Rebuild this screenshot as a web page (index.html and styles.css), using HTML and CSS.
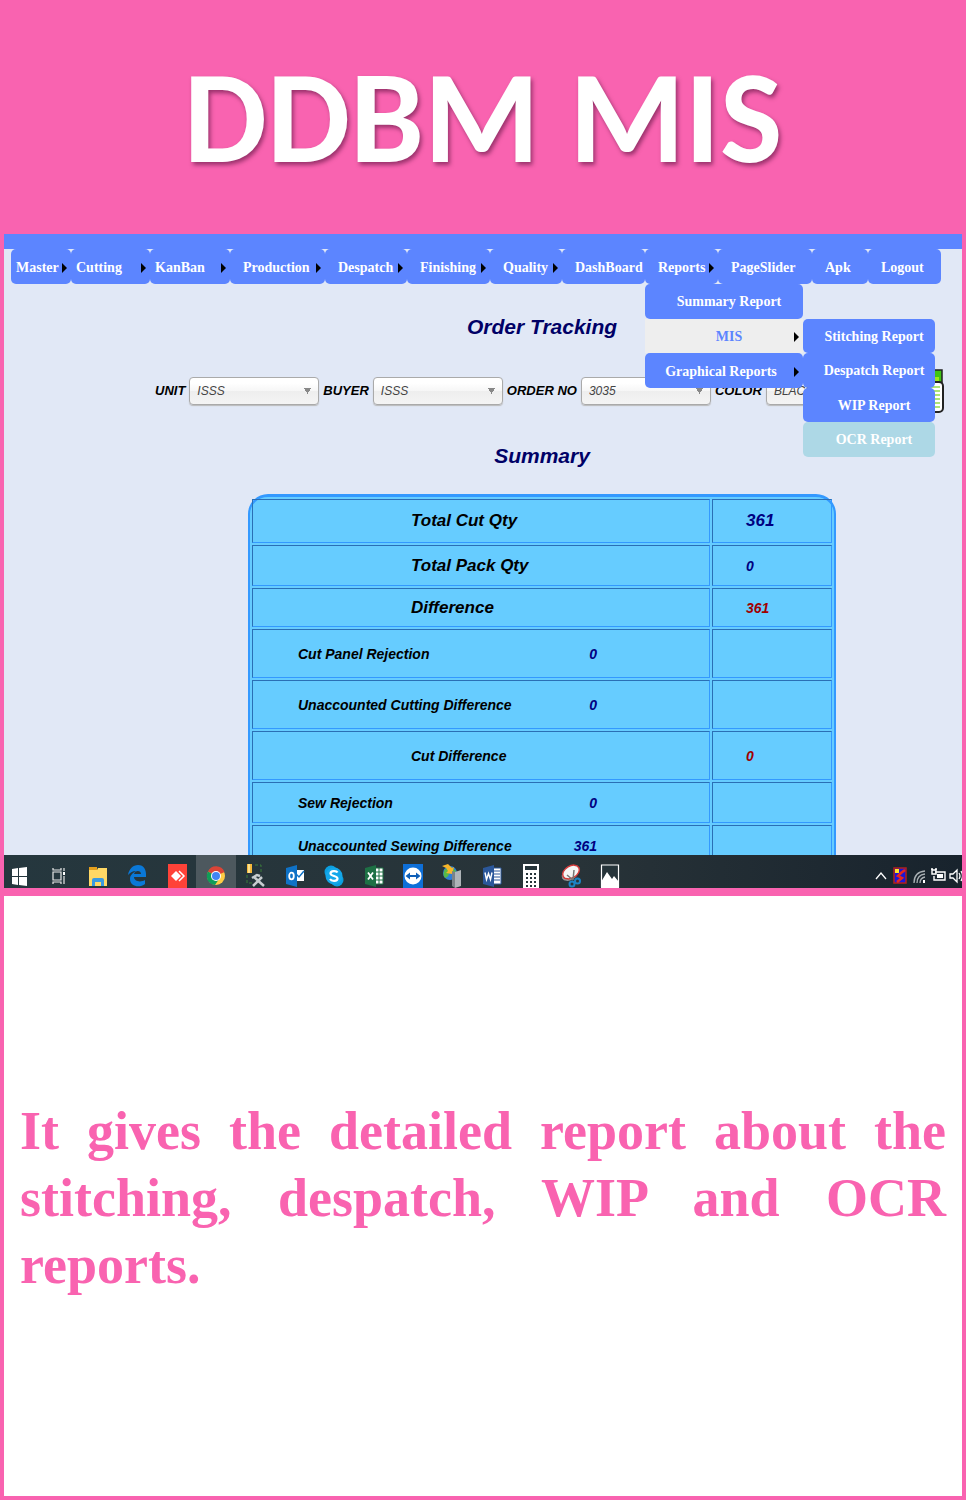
FILE: index.html
```html
<!DOCTYPE html>
<html lang="en">
<head>
<meta charset="utf-8">
<meta name="viewport" content="width=device-width, initial-scale=1">
<title>DDBM MIS</title>
<link rel="stylesheet" href="styles.css">
</head>
<body>
<div class="page">
  <header class="banner"><h1>DDBM MIS</h1></header>

  <section class="screen">
    <nav class="nav">
      <ul class="menu">
        <li><a class="tight" href="#">Master<i class="arrow"></i></a></li>
        <li><a class="tight" href="#">Cutting<i class="arrow"></i></a></li>
        <li><a class="tight" href="#">KanBan<i class="arrow"></i></a></li>
        <li><a href="#">Production<i class="arrow"></i></a></li>
        <li><a href="#">Despatch<i class="arrow"></i></a></li>
        <li><a href="#">Finishing<i class="arrow"></i></a></li>
        <li><a href="#">Quality<i class="arrow"></i></a></li>
        <li><a href="#">DashBoard</a></li>
        <li><a href="#">Reports<i class="arrow"></i></a>
          <ul class="sub reports">
            <li><a href="#">Summary Report</a></li>
            <li><a class="hover" href="#">MIS<i class="arrow"></i></a>
              <ul class="sub mis">
                <li><a href="#">Stitching Report</a></li>
                <li><a href="#">Despatch Report</a></li>
                <li><a href="#">WIP Report</a></li>
                <li><a class="current" href="#">OCR Report</a></li>
              </ul>
            </li>
            <li><a class="wide" href="#">Graphical Reports<i class="arrow"></i></a></li>
          </ul>
        </li>
        <li><a href="#">PageSlider</a></li>
        <li><a href="#">Apk</a></li>
        <li><a href="#">Logout</a></li>
      </ul>
    </nav>

    <main class="content">
      <h2>Order Tracking</h2>
      <form class="filters">
        <label for="unit">UNIT</label>
        <select id="unit"><option>ISSS</option></select>
        <label for="buyer">BUYER</label>
        <select id="buyer"><option>ISSS</option></select>
        <label for="order">ORDER NO</label>
        <select id="order"><option>3035</option></select>
        <label for="color">COLOR</label>
        <select id="color"><option>BLACK</option></select>
        <button class="export" type="button" aria-label="Export">
          <svg width="42" height="44" viewBox="0 0 42 44"><rect x="1" y="1" width="39" height="20" fill="#3fc414" stroke="#222" stroke-width="1.5"/><rect x="32" y="8" width="5" height="5" fill="#9be819"/><rect x="1" y="13" width="40" height="30" rx="4" fill="#fff" stroke="#222" stroke-width="2"/><path d="M6 18h32M6 22h32M6 26h32M6 30h32M6 34h32M6 38h32" stroke="#92dc4a" stroke-width="1.5"/></svg>
        </button>
      </form>
      <h2>Summary</h2>
      <table class="summary">
        <tbody>
          <tr class="r44 big"><td><div class="mid">Total Cut Qty</div></td><td class="num">361</td></tr>
          <tr class="r41 big"><td><div class="mid">Total Pack Qty</div></td><td class="num small">0</td></tr>
          <tr class="r39 big"><td><div class="mid">Difference</div></td><td class="num small red">361</td></tr>
          <tr class="r49"><td><div class="pair"><span>Cut Panel Rejection</span><b>0</b></div></td><td></td></tr>
          <tr class="r49"><td><div class="pair"><span>Unaccounted Cutting Difference</span><b>0</b></div></td><td></td></tr>
          <tr class="r49"><td><div class="mid">Cut Difference</div></td><td class="num red">0</td></tr>
          <tr class="r41"><td><div class="pair"><span>Sew Rejection</span><b>0</b></div></td><td></td></tr>
          <tr class="r41"><td><div class="pair"><span>Unaccounted Sewing Difference</span><b>361</b></div></td><td></td></tr>
        </tbody>
      </table>
    </main>

    <footer class="taskbar">
      <div class="apps">
        <button aria-label="Start"><svg viewBox="0 0 24 24"><path fill="#fff" d="M5 5l6-1v8H5zM12 4l8-1v9h-8zM5 13h6v8l-6-1zM12 13h8v9l-8-1z"/></svg></button>
        <button aria-label="Task view"><svg viewBox="0 0 24 24"><path fill="none" stroke="#e8e8e8" stroke-width="1.2" d="M6 8h8v8H6zM6 4v2h8V4M6 20v-2h8v2M17 4v3M17 12v8"/><path fill="#fff" d="M16 8h2v3h-2z"/></svg></button>
        <button aria-label="File Explorer"><svg viewBox="0 0 24 24"><path fill="#e59f1c" d="M3 3h8v4H3z"/><path fill="#ffd865" d="M3 6h8l1-2h9v18H3z"/><path fill="#3a9ae0" d="M6 22v-6q0-2 2-2h8q2 0 2 2v6h-3v-4H9v4z"/></svg></button>
        <button aria-label="Edge"><svg viewBox="0 0 24 24"><path fill="#0a78d7" d="M3 11C4 5 8 1 13 1c6 0 8 5 8 9v3H9c0 4 6 6 11 3v4c-5 4-15 3-15-5 0-4 3-6 6-8-4 0-6 2-8 4zm6-1h7c0-4-6-4-7 0z"/></svg></button>
        <button aria-label="AnyDesk"><svg viewBox="0 0 24 24"><path fill="#ff4238" d="M3 0h19v24H3z"/><path fill="#fff" d="M11 7l5 5-5 5-5-5z"/><path fill="none" stroke="#fff" stroke-width="1.500" d="M14 7l5 5-5 5"/></svg></button>
        <button class="on" aria-label="Chrome"><svg viewBox="0 0 24 24"><circle cx="12" cy="12" r="9" fill="#fc4"/><path fill="#db4437" d="M12 12L4 7.500A9 9 0 0 1 20.500 8z"/><path fill="#0f9d58" d="M12 12L4 7.500A9 9 0 0 0 11 21l4-6z"/><circle cx="12" cy="12" r="5" fill="#fff"/><circle cx="12" cy="12" r="4" fill="#4285f4"/></svg></button>
        <button aria-label="SQL tools"><svg viewBox="0 0 24 24"><path fill="#f6b93b" d="M3 0h5v9H3z"/><path fill="#ffe08a" d="M4 0h2v9H4z"/><path fill="none" stroke="#3b7d3a" stroke-dasharray="3 2" d="M11 1h6v7M3 11v8h6"/><path fill="none" stroke="#c7ccd0" stroke-width="2.500" d="M9 22l9-9M10 13l10 9M8 14l5-3 3 1"/></svg></button>
        <button aria-label="Outlook"><svg viewBox="0 0 24 24"><path fill="#fff" d="M12 6h9v11h-9z"/><path fill="none" stroke="#0f72c6" stroke-width="1.500" d="M12 9l4 4 5-6"/><path fill="#0f72c6" d="M3 4l11-3v22L3 20z"/><ellipse cx="8.500" cy="12" rx="2.300" ry="3.300" fill="none" stroke="#fff" stroke-width="1.800"/></svg></button>
        <button aria-label="Skype"><svg viewBox="0 0 24 24"><circle cx="9" cy="8" r="6.500" fill="#0b9fe0"/><circle cx="15" cy="16" r="6.500" fill="#0b9fe0"/><circle cx="12" cy="12" r="8.500" fill="#14a7ea"/><path fill="none" stroke="#fff" stroke-width="2.200" d="M15.500 8.500c-1-2-7-2-7 1 0 3 7 2 7 5 0 3-6 3-7.500.500"/></svg></button>
        <button aria-label="Excel"><svg viewBox="0 0 24 24"><path fill="#fff" stroke="#1e7145" d="M13 4h8v16h-8z"/><path stroke="#1e7145" d="M13 8h8M13 12h8M13 16h8M17 4v16"/><path fill="#1e7145" d="M3 4l11-3v22L3 20z"/><path stroke="#fff" stroke-width="1.800" d="M6 8.500l5 7M11 8.500l-5 7"/></svg></button>
        <button aria-label="TeamViewer"><svg viewBox="0 0 24 24"><path fill="#0e6fd8" d="M2 0h20v24H2z"/><circle cx="12" cy="12" r="8.500" fill="#fff"/><path fill="#0e5fb8" d="M4.500 12L9 8.500V11h6V8.500l4.500 3.500-4.500 3.500V13H9v2.500z"/></svg></button>
        <button aria-label="Web server"><svg viewBox="0 0 24 24"><circle cx="10" cy="9" r="7" fill="#2f7fd6"/><path fill="#58b947" d="M5 5q4 0 4 4t-4 5q-3-4 0-9zM11 3l5 4-3 5z"/><path fill="#f6b52a" d="M2 2l6-2 4 4 2-1-2 7-6-1 2-2-2-3z"/><path fill="#aeb4b8" d="M15 8l6-2v16l-6 2z"/><path fill="#7b8287" d="M12 7l3 1v16l-3-2z"/></svg></button>
        <button aria-label="Word"><svg viewBox="0 0 24 24"><path fill="#fff" stroke="#2b579a" d="M13 4h8v16h-8z"/><path stroke="#2b579a" d="M14 7h6M14 10h6M14 13h6M14 16h6"/><path fill="#2b579a" d="M3 4l11-3v22L3 20z"/><path fill="none" stroke="#fff" stroke-width="1.400" d="M5 8.500l1.500 7 2-6 2 6 1.500-7"/></svg></button>
        <button aria-label="Calculator"><svg viewBox="0 0 24 24"><path fill="#fff" d="M4 0h16v24H4z"/><path fill="#26343a" d="M6 2h12v4H6zM7 9h2v2H7zM11 9h2v2h-2zM15 9h2v2h-2zM7 13h2v2H7zM11 13h2v2h-2zM15 13h2v2h-2zM7 17h2v2H7zM11 17h2v2h-2zM15 17h2v2h-2zM7 21h2v2H7zM11 21h2v2h-2zM15 21h2v2h-2z"/></svg></button>
        <button aria-label="Snipping Tool"><svg viewBox="0 0 24 24"><ellipse cx="11" cy="10" rx="9" ry="6" transform="rotate(-30 11 10)" fill="#999"/><ellipse cx="12" cy="8" rx="9" ry="6" transform="rotate(-30 12 8)" fill="#f5f5f5" stroke="#d33b3b" stroke-width="1.500"/><path stroke="#777" stroke-width="1.500" d="M8 11l6 5M15 6l-1 10"/><g fill="none" stroke="#1b83c4" stroke-width="2"><circle cx="13" cy="20" r="2.500"/><circle cx="18.500" cy="17" r="2.500"/></g></svg></button>
        <button aria-label="Photos"><svg viewBox="0 0 24 24"><path fill="#26343a" stroke="#fff" stroke-width="1.200" d="M3.500 1h17v22h-17z"/><path fill="#fff" d="M3 18l6-10 5 7 2-3 5 6v6H3z"/></svg></button>
      </div>
      <div class="tray">
        <svg viewBox="0 0 18 24"><path fill="none" stroke="#fff" stroke-width="1.300" d="M4 15l5-6 5 6"/></svg>
        <svg viewBox="0 0 18 24"><path fill="#1b16d8" stroke="#b3201c" stroke-width="1.500" d="M3 4h12v15H3z"/><path fill="#ffe32a" d="M4 5h4v4H4z"/><path fill="none" stroke="#e8281e" stroke-width="2.500" d="M14 6l-4 3-3 3 4 2-5 4"/></svg>
        <svg viewBox="0 0 18 24"><g fill="none" stroke="#a9b0b4" stroke-width="1.300"><path d="M4 19Q4 8 15 7M7 19q0-8 8-9M10 19q0-5 5-6"/></g><path fill="#fff" d="M13 16h2v3h-2z"/></svg>
        <svg viewBox="0 0 18 24"><path fill="none" stroke="#fff" stroke-width="1.400" d="M6 8h10v8H5v-4M3 6v4h4V6zM2 5h2M6 5h2"/><path fill="#fff" d="M8 10h6v4H8z"/></svg>
        <svg viewBox="0 0 18 24"><path fill="none" stroke="#fff" stroke-width="1.300" d="M2 10h3l4-4v12l-4-4H2zM11 9q2 3 0 6M13 7q3 5 0 10"/></svg>
      </div>
    </footer>
  </section>

  <section class="note">
    <p>It gives the detailed report about the stitching, despatch, WIP and OCR reports.</p>
  </section>
</div>
</body>
</html>
```
FILE: styles.css
```css
* { box-sizing: border-box; }
body { margin: 0; }
.page {
  min-height: 100vh;
  padding: 0 4px 4px;
  display: flex;
  flex-direction: column;
  background: #f963b0;
}
.banner {
  height: 234px;
  display: flex;
  align-items: center;
  justify-content: center;
}
.banner h1 {
  margin: 0;
  font: 700 132px/1.2 Carlito, Lato, sans-serif;
  color: #fff;
  text-shadow: 2px 3px 4px rgba(60, 0, 40, .5);
}

.screen {
  height: 654px;
  display: flex;
  flex-direction: column;
  overflow: hidden;
  background: #e1e8f6;
}

/* Navigation */
.nav {
  padding: 0 21px 0 7px;
  border-top: 15px solid #5c85ff;
  font: 700 14px/20px "Liberation Serif", serif;
}
.nav ul { margin: 0; padding: 0; list-style: none; }
.nav li { position: relative; min-width: 0; }
.nav a {
  display: flex;
  align-items: center;
  justify-content: space-between;
  height: 100%;
  padding: 3px 4px 0 13px;
  border-radius: 5px;
  background: #5c85ff;
  color: #fff;
  text-decoration: none;
  white-space: nowrap;
}
.nav a.tight { padding-left: 5px; }
.arrow {
  flex: none;
  border: solid transparent;
  border-width: 5px 0 5px 5px;
  border-left-color: #000;
}
.menu {
  display: grid;
  grid-template-columns: 60fr 79fr 80fr 95fr 82fr 83fr 72fr 83fr 73fr 94fr 56fr 73fr;
  grid-auto-rows: 35px;
}
.nav .sub {
  position: absolute;
  z-index: 2;
  display: grid;
  grid-auto-rows: 1fr;
}
.nav .reports { top: 100%; left: 0; width: 158px; height: 104px; }
.nav .mis { top: 0; left: 100%; width: 132px; height: 138px; }
.nav .sub a { justify-content: center; padding: 2px 0 0 10px; }
.sub .arrow { position: absolute; right: 4px; }
.nav .sub .wide { padding: 2px 6px 0 0; }
.nav .hover { border-radius: 0; background: #eee; color: #5c85ff; }
.nav .current { background: #add8e6; }

/* Order tracking */
.content {
  flex: 1;
  min-height: 0;
  overflow: hidden;
  padding-left: 118px;
  font: italic 700 14px/20px "Liberation Sans", sans-serif;
}
.content h2 {
  margin: 0;
  padding-top: 25px;
  font-size: 21px;
  line-height: 36px;
  text-align: center;
  color: #006;
}
.filters {
  display: flex;
  align-items: center;
  gap: 4px;
  height: 44px;
  margin: 24px 0 0 33px;
  font-size: 13px;
  white-space: nowrap;
}
.filters select {
  appearance: none;
  flex: none;
  width: 130px;
  height: 28px;
  padding: 0 7px;
  border: 1px solid #aaa;
  border-radius: 4px;
  color: #444;
  font: italic 400 12px/20px "Liberation Sans", sans-serif;
  background:
    conic-gradient(from -30deg at 50% 100%, #888 60deg, transparent 0) right 7px center / 7px 6px no-repeat,
    linear-gradient(#fff 20%, #f6f6f6 50%, #eee 52%, #f4f4f4);
  background:
    linear-gradient(#888, #888) right 7px center / 0 0 no-repeat,
    conic-gradient(from -30deg at 50% 100%, #888 60deg, transparent 0) right 7px center / 7px 6px no-repeat,
    linear-gradient(#fff 20%, #f6f6f6 50%, #eee 52%, #f4f4f4);
  box-shadow: 0 1px 1px #bbb;
}
.export { margin-left: 2px; padding: 0; border: 0; background: none; display: flex; }

.summary {
  width: 588px;
  margin: 20px auto 0;
  border: 3px solid #39f;
  border-width: 3px 2px;
  border-radius: 20px 20px 0 0;
  border-collapse: separate;
  border-spacing: 2px;
  background: #6cf;
  table-layout: fixed;
}
.summary td {
  padding: 0;
  border: 1px solid #39f;
  border-top-color: #2a6fb5;
  border-left-color: #2a6fb5;
}
.summary td:first-child { width: 458px; }
.summary td + td { padding-left: 33px; }
.r39 { height: 39px; }
.r41 { height: 41px; }
.r44 { height: 44px; }
.r49 { height: 49px; }
.big { font-size: 17px; }
.mid { padding-left: 158px; }
.pair {
  display: flex;
  justify-content: space-between;
  padding: 0 112px 0 45px;
}
.pair b, .num { color: #000080; }
.num.small { font-size: 14px; }
.num.red { color: #a00000; }

/* Taskbar */
.taskbar {
  flex: none;
  height: 33px;
  display: flex;
  align-items: flex-end;
  justify-content: space-between;
  overflow: hidden;
  background: linear-gradient(90deg, #25373e, #283338 60%, #18232d);
}
.apps {
  width: 65.3%;
  display: grid;
  grid-template-columns: 35px repeat(15, 1fr);
}
.apps button {
  height: 33px;
  padding: 9px 0 0;
  border: 0;
  background: none;
  display: flex;
  justify-content: center;
}
.apps button:first-child { padding-right: 5px; }
.apps .on { background: #4d585e; }
.apps svg { flex: none; width: 24px; height: 24px; }
.tray { display: flex; gap: 1px; margin-right: -4px; }
.tray svg { width: 18px; height: 24px; }

/* Description */
.note {
  flex: 1;
  margin-top: 8px;
  padding: 4px 16px 0;
  display: flex;
  align-items: center;
  background: #fff;
}
.note p {
  margin: 0;
  font: 700 54px/67px Garamond, "Liberation Serif", serif;
  text-align: justify;
  color: #f963b0;
}
```
